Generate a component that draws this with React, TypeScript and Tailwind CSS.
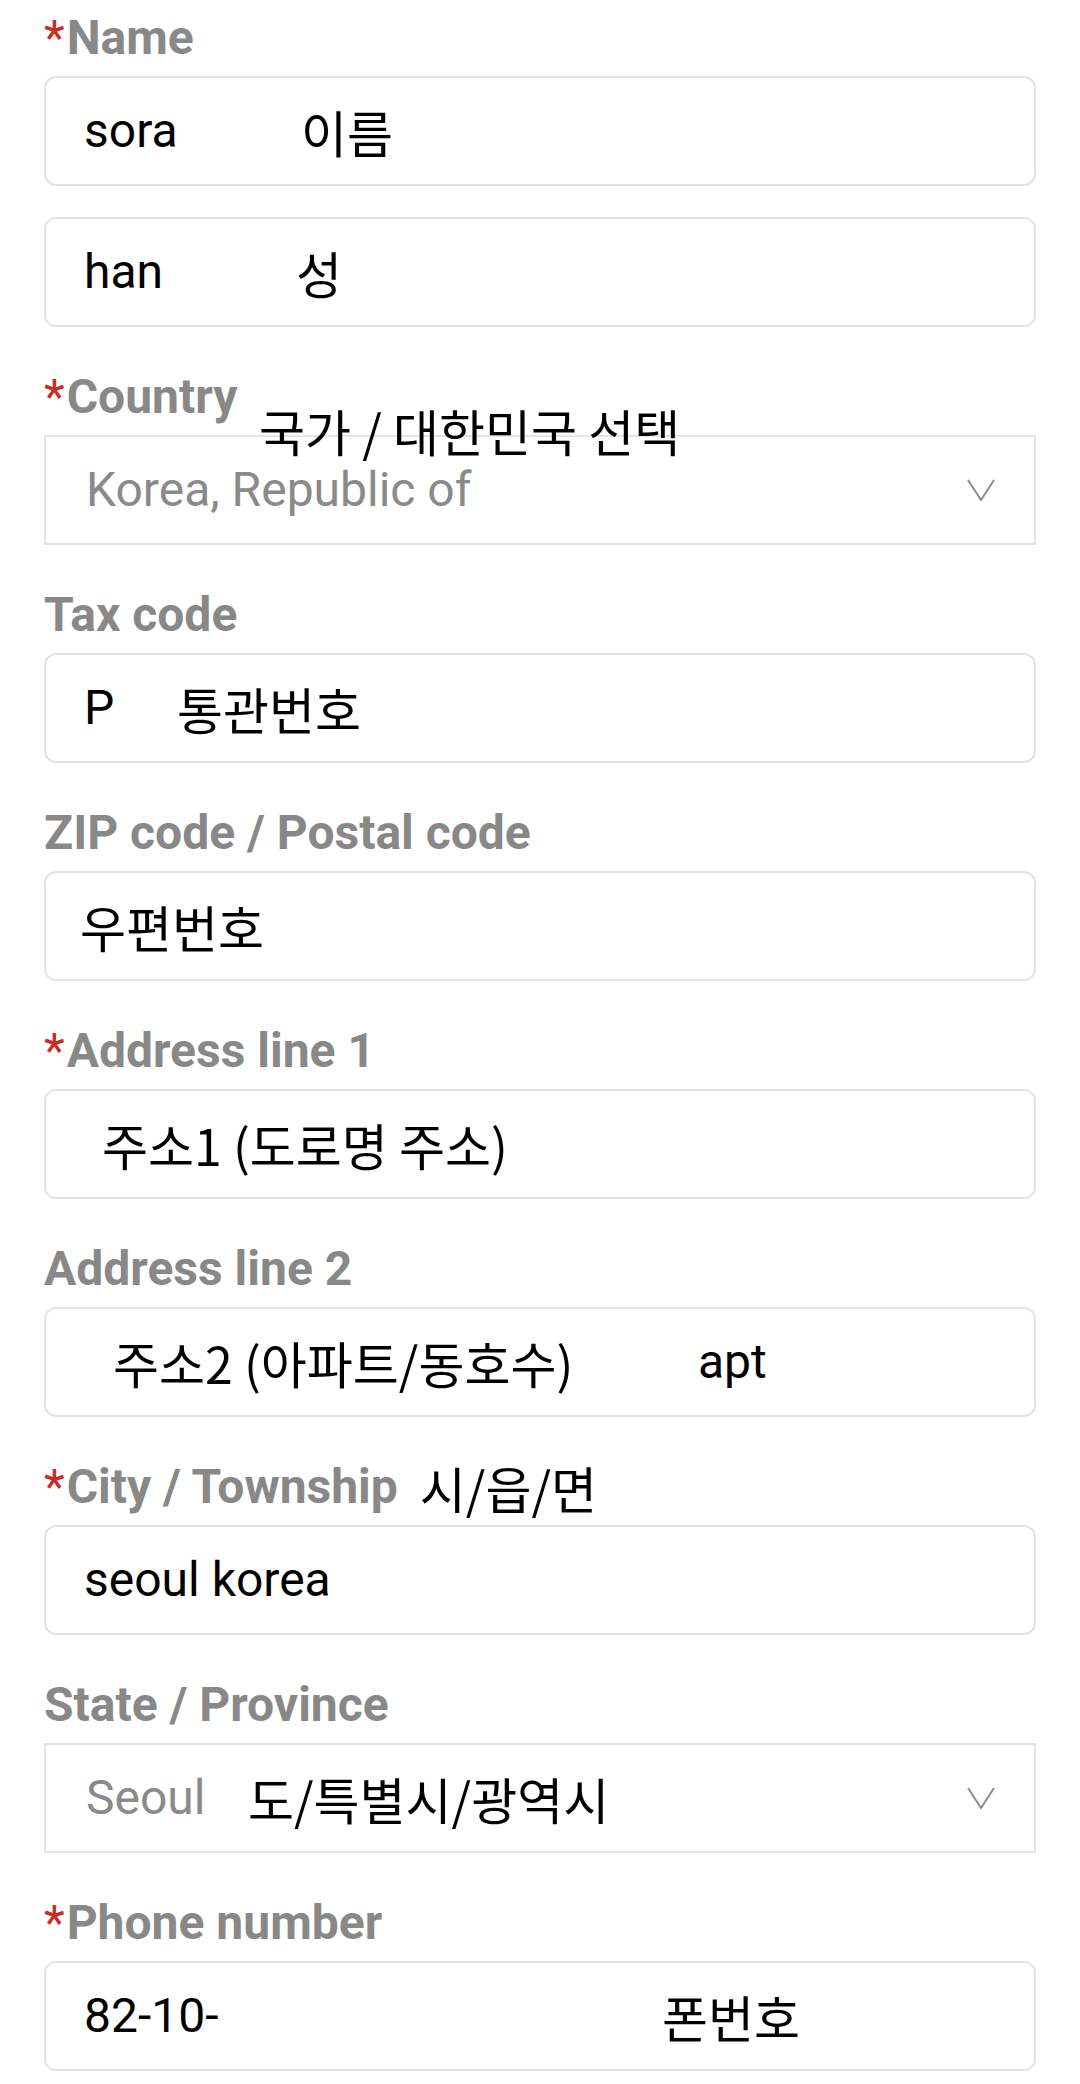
import React from 'react';

const ko = "font-['Noto_Sans_CJK_KR',sans-serif] font-normal text-[50px] leading-none text-black";

const Label: React.FC<{ text: string; required?: boolean; children?: React.ReactNode }> = ({ text, required, children }) => (
  <div className="flex items-center h-[56px] text-[48px] leading-[56px] font-bold text-[#888888] whitespace-nowrap">
    {required && <span className="text-[#cc2a24] font-normal mr-[2px]">*</span>}
    <span>{text}</span>
    {children}
  </div>
);

const InputBox: React.FC<{ children: React.ReactNode }> = ({ children }) => (
  <div className="h-[110px] rounded-[12px] border-2 border-[#e4e4e4] bg-white flex items-center pl-[38px] text-[48px] text-black whitespace-nowrap">
    {children}
  </div>
);

const SelectBox: React.FC<{ children: React.ReactNode }> = ({ children }) => (
  <div className="h-[110px] border-2 border-[#e4e4e4] bg-white flex items-center pl-[40px] text-[48px] text-[#8a8a8a] whitespace-nowrap">
    {children}
    <svg className="ml-auto mr-[39px]" width="28" height="22" viewBox="0 0 28 22" fill="none">
      <polyline points="1,1 14,21 27,1" stroke="#8c8c8c" strokeWidth="2" />
    </svg>
  </div>
);

export default function App() {
  return (
    <div className="w-[1080px] min-h-[2084px] bg-white px-[44px] pt-[10px] flex flex-col gap-[42px] font-[Roboto,sans-serif]">
      <div className="flex flex-col">
        <Label text="Name" required />
        <div className="mt-[10px]">
          <InputBox>
            <span className="w-[217px]">sora</span>
            <span className={ko}>이름</span>
          </InputBox>
        </div>
        <div className="mt-[31px]">
          <InputBox>
            <span className="w-[212px]">han</span>
            <span className={ko}>성</span>
          </InputBox>
        </div>
      </div>

      <div className="relative flex flex-col gap-[10px]">
        <Label text="Country" required />
        <SelectBox>
          <span>Korea, Republic of</span>
        </SelectBox>
        <span className={`${ko} absolute left-[215px] top-[36px] whitespace-nowrap`}>국가 / 대한민국 선택</span>
      </div>

      <div className="flex flex-col gap-[10px]">
        <Label text="Tax code" />
        <InputBox>
          <span className="w-[93px]">P</span>
          <span className={ko}>통관번호</span>
        </InputBox>
      </div>

      <div className="flex flex-col gap-[10px]">
        <Label text="ZIP code / Postal code" />
        <InputBox>
          <span className={`${ko} -ml-[4px]`}>우편번호</span>
        </InputBox>
      </div>

      <div className="flex flex-col gap-[10px]">
        <Label text="Address line 1" required />
        <InputBox>
          <span className={`${ko} ml-[18px]`}>주소1 (도로명 주소)</span>
        </InputBox>
      </div>

      <div className="flex flex-col gap-[10px]">
        <Label text="Address line 2" />
        <InputBox>
          <span className={`${ko} ml-[29px] w-[585px]`}>주소2 (아파트/동호수)</span>
          <span>apt</span>
        </InputBox>
      </div>

      <div className="flex flex-col gap-[10px]">
        <Label text="City / Township" required>
          <span className={`${ko} ml-[22px]`}>시/읍/면</span>
        </Label>
        <InputBox>
          <span>seoul korea</span>
        </InputBox>
      </div>

      <div className="flex flex-col gap-[10px]">
        <Label text="State / Province" />
        <SelectBox>
          <span className="w-[162px]">Seoul</span>
          <span className={ko}>도/특별시/광역시</span>
        </SelectBox>
      </div>

      <div className="flex flex-col gap-[10px]">
        <Label text="Phone number" required />
        <InputBox>
          <span className="w-[578px]">82-10-</span>
          <span className={ko}>폰번호</span>
        </InputBox>
      </div>
    </div>
  );
}
